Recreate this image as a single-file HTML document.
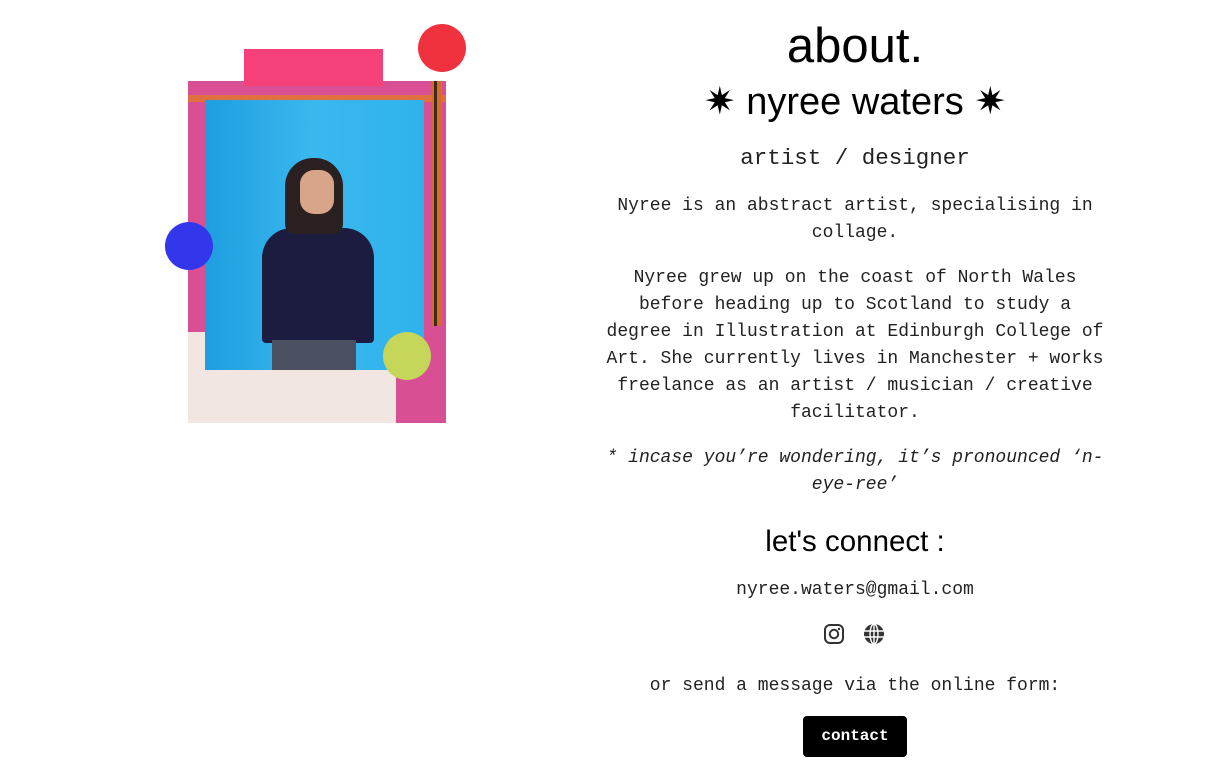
<!DOCTYPE html>
<html><head><meta charset="utf-8"><style>
body{margin:0;background:#fff;width:1215px;height:781px;overflow:hidden;position:relative;font-family:"Liberation Mono","Courier New",monospace;color:#222}
.a{position:absolute}
.c{border-radius:50%;width:48px;height:48px}
.col{position:absolute;left:605px;width:500px;text-align:center}
p{margin:0;font-size:18px;line-height:27px}
h{display:block;font-family:"Liberation Sans",sans-serif;color:#000}
</style></head><body>
<div class="a" style="left:188px;top:81px;width:258px;height:342px;background:#d94f94"></div>
<div class="a" style="left:188px;top:95px;width:258px;height:7px;background:#e07040"></div>
<div class="a" style="left:432px;top:81px;width:10px;height:245px;background:#d86a2a"></div>
<div class="a" style="left:434px;top:81px;width:3px;height:245px;background:#3a2a20"></div>
<div class="a" style="left:188px;top:332px;width:208px;height:91px;background:#f1e6e2"></div>
<div class="a" style="left:205px;top:100px;width:219px;height:270px;background:linear-gradient(90deg,#1e9ee0,#3ab8ee 50%,#2fb2ec)"></div>
<div class="a" style="left:262px;top:228px;width:112px;height:115px;background:#1c1c40;border-radius:30px 30px 4px 4px"></div>
<div class="a" style="left:272px;top:340px;width:84px;height:30px;background:#4a5060"></div>
<div class="a" style="left:285px;top:158px;width:58px;height:76px;background:#2a2020;border-radius:28px 28px 10px 10px"></div>
<div class="a" style="left:300px;top:170px;width:34px;height:44px;background:#d9a58a;border-radius:14px"></div>
<div class="a" style="left:244px;top:49px;width:139px;height:37px;background:#f5407a"></div>
<div class="a c" style="left:418px;top:24px;background:#f0323f"></div>
<div class="a c" style="left:165px;top:222px;background:#3237ec"></div>
<div class="a c" style="left:383px;top:332px;background:#c5d65a"></div>

<div class="col" style="top:17px"><h style="font-size:49px;line-height:58px">about.</h></div>
<div class="col" style="top:79px"><h style="font-size:38px;line-height:46px">✷ nyree waters ✷</h></div>
<div class="col" style="top:143px"><p style="font-size:22.5px;line-height:30px">artist / designer</p></div>
<div class="col" style="top:193px"><p>Nyree is an abstract artist, specialising in collage.</p></div>
<div class="col" style="top:265px"><p>Nyree grew up on the coast of North Wales before heading up to Scotland to study a degree in Illustration at Edinburgh College of Art. She currently lives in Manchester + works freelance as an artist / musician / creative facilitator.</p></div>
<div class="col" style="top:445px"><p style="font-style:italic">* incase you’re wondering, it’s pronounced ‘n-eye-ree’</p></div>
<div class="col" style="top:524px"><h style="font-size:29.5px;line-height:36px">let's connect :</h></div>
<div class="col" style="top:577px"><p>nyree.waters@gmail.com</p></div>
<svg class="a" style="left:823px;top:623px" width="22" height="22" viewBox="0 0 22 22"><rect x="2" y="2" width="18" height="18" rx="5" fill="none" stroke="#333" stroke-width="2"/><circle cx="11" cy="11" r="4.2" fill="none" stroke="#333" stroke-width="2"/><circle cx="16" cy="6" r="1.2" fill="#333"/></svg>
<svg class="a" style="left:863px;top:623px" width="22" height="22" viewBox="0 0 22 22"><circle cx="11" cy="11" r="10" fill="#333"/><g stroke="#fff" stroke-width="1.4" fill="none"><ellipse cx="11" cy="11" rx="4" ry="10"/><line x1="1" y1="8" x2="21" y2="8"/><line x1="1" y1="14" x2="21" y2="14"/><line x1="11" y1="1" x2="11" y2="21"/></g></svg>
<div class="col" style="top:673px"><p>or send a message via the online form:</p></div>
<div class="a" style="left:803px;top:716px;width:104px;height:41px;background:#000;border-radius:4px;color:#fff;font-weight:bold;font-size:16px;line-height:41px;text-align:center">contact</div>
</body></html>
